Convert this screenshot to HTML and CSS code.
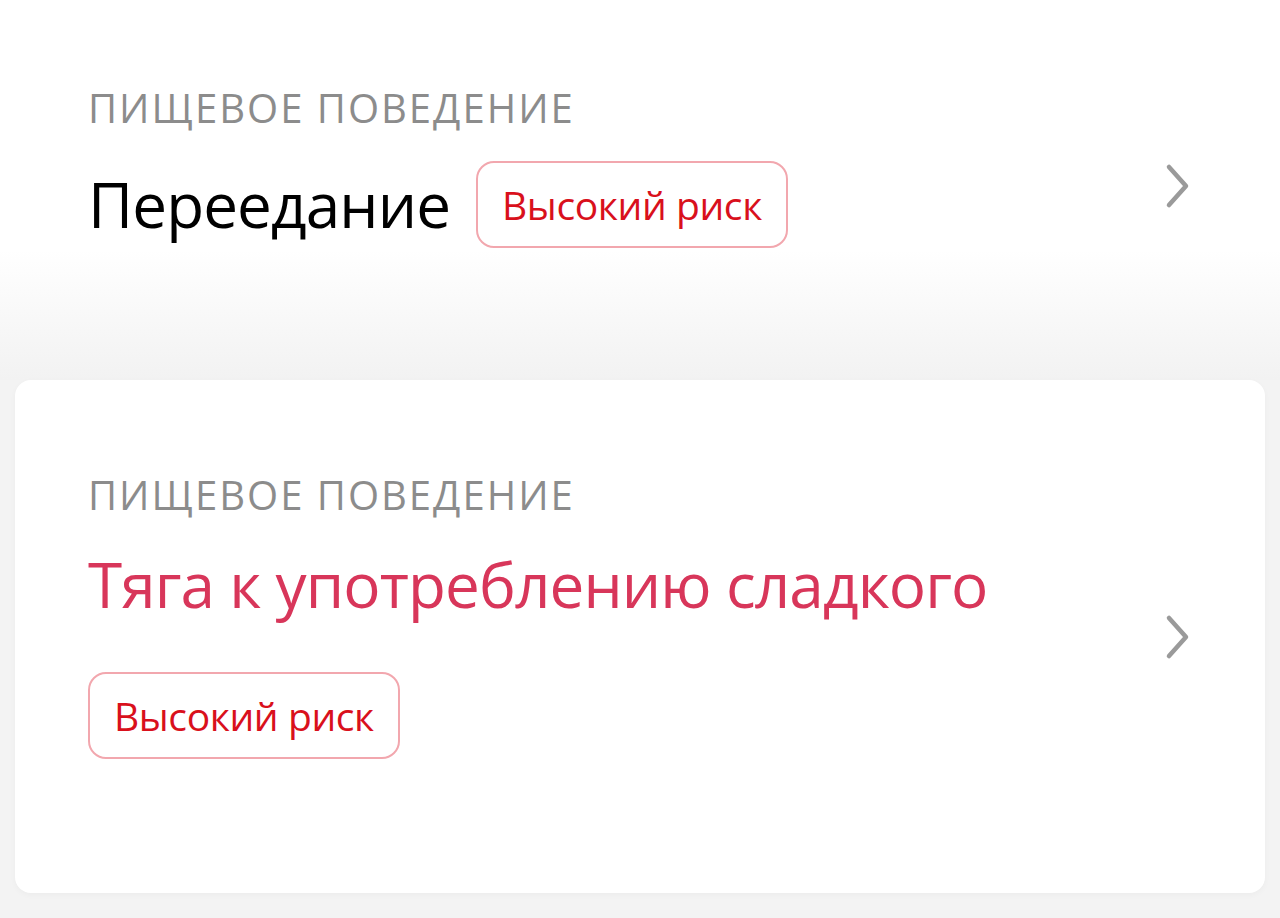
FILE: index.html
```html
<!DOCTYPE html>
<html lang="ru">
<head>
    <meta charset="UTF-8">
    <meta name="viewport" content="width=device-width, initial-scale=1.0">
    <title>Пищевое поведение</title>
    <link rel="stylesheet" href="styles.css">
</head>
<body>
    <div class="list">
        <div class="item item-top">
            <div class="item-body">
                <div class="category">Пищевое поведение</div>
                <div class="title-row">
                    <span class="title">Переедание</span>
                    <span class="badge">Высокий риск</span>
                </div>
            </div>
            <svg class="chevron" width="28" height="48" viewBox="0 0 28 48">
                <path d="M5 5 L22 24 L5 43" fill="none" stroke="#9a9a9a" stroke-width="4.5" stroke-linecap="round" stroke-linejoin="round"/>
            </svg>
        </div>

        <div class="item item-card">
            <div class="item-body">
                <div class="category">Пищевое поведение</div>
                <div class="title title-accent">Тяга к употреблению сладкого</div>
                <span class="badge">Высокий риск</span>
            </div>
            <svg class="chevron" width="28" height="48" viewBox="0 0 28 48">
                <path d="M5 5 L22 24 L5 43" fill="none" stroke="#9a9a9a" stroke-width="4.5" stroke-linecap="round" stroke-linejoin="round"/>
            </svg>
        </div>
    </div>
</body>
</html>
```

FILE: styles.css
```css
body {
    margin: 0;
    font-family: 'Open Sans', 'Noto Sans', sans-serif;
    background: #f3f3f3;
    height: 918px;
    overflow: hidden;
}
.list {
    display: flex;
    flex-direction: column;
}
.item {
    display: flex;
    justify-content: space-between;
}
.item-top {
    height: 380px;
    align-items: flex-start;
    padding: 85px 88px 0 88px;
    box-sizing: border-box;
    background: linear-gradient(180deg, #ffffff 0, #ffffff 250px, #f2f2f2 380px);
}
.item-top .chevron {
    margin-top: 77px;
}
.item-card {
    margin: 0 15px;
    height: 513px;
    box-sizing: border-box;
    padding: 0 73px;
    align-items: center;
    background: #ffffff;
    border-radius: 16px;
    box-shadow: 0 2px 6px rgba(0, 0, 0, 0.03);
}
.item-card .item-body {
    align-self: flex-start;
    padding-top: 92px;
}
.item-body {
    display: flex;
    flex-direction: column;
    align-items: flex-start;
}
.category {
    font-size: 40px;
    line-height: 46px;
    letter-spacing: 2px;
    text-transform: uppercase;
    color: #8c8c8c;
}
.title-row {
    display: flex;
    align-items: center;
    gap: 26px;
    margin-top: 29px;
}
.title {
    font-size: 62px;
    line-height: 88px;
    letter-spacing: -0.9px;
    color: #000000;
}
.title-accent {
    color: #d8365a;
    margin-top: 22px;
}
.badge {
    display: inline-block;
    border: 2px solid #f2a7ae;
    border-radius: 18px;
    padding: 0 24px;
    height: 87px;
    line-height: 83px;
    box-sizing: border-box;
    font-size: 39px;
    letter-spacing: -0.4px;
    color: #d9101c;
    background: #ffffff;
}
.item-card .badge {
    margin-top: 44px;
}
.chevron {
    flex: none;
}
```
